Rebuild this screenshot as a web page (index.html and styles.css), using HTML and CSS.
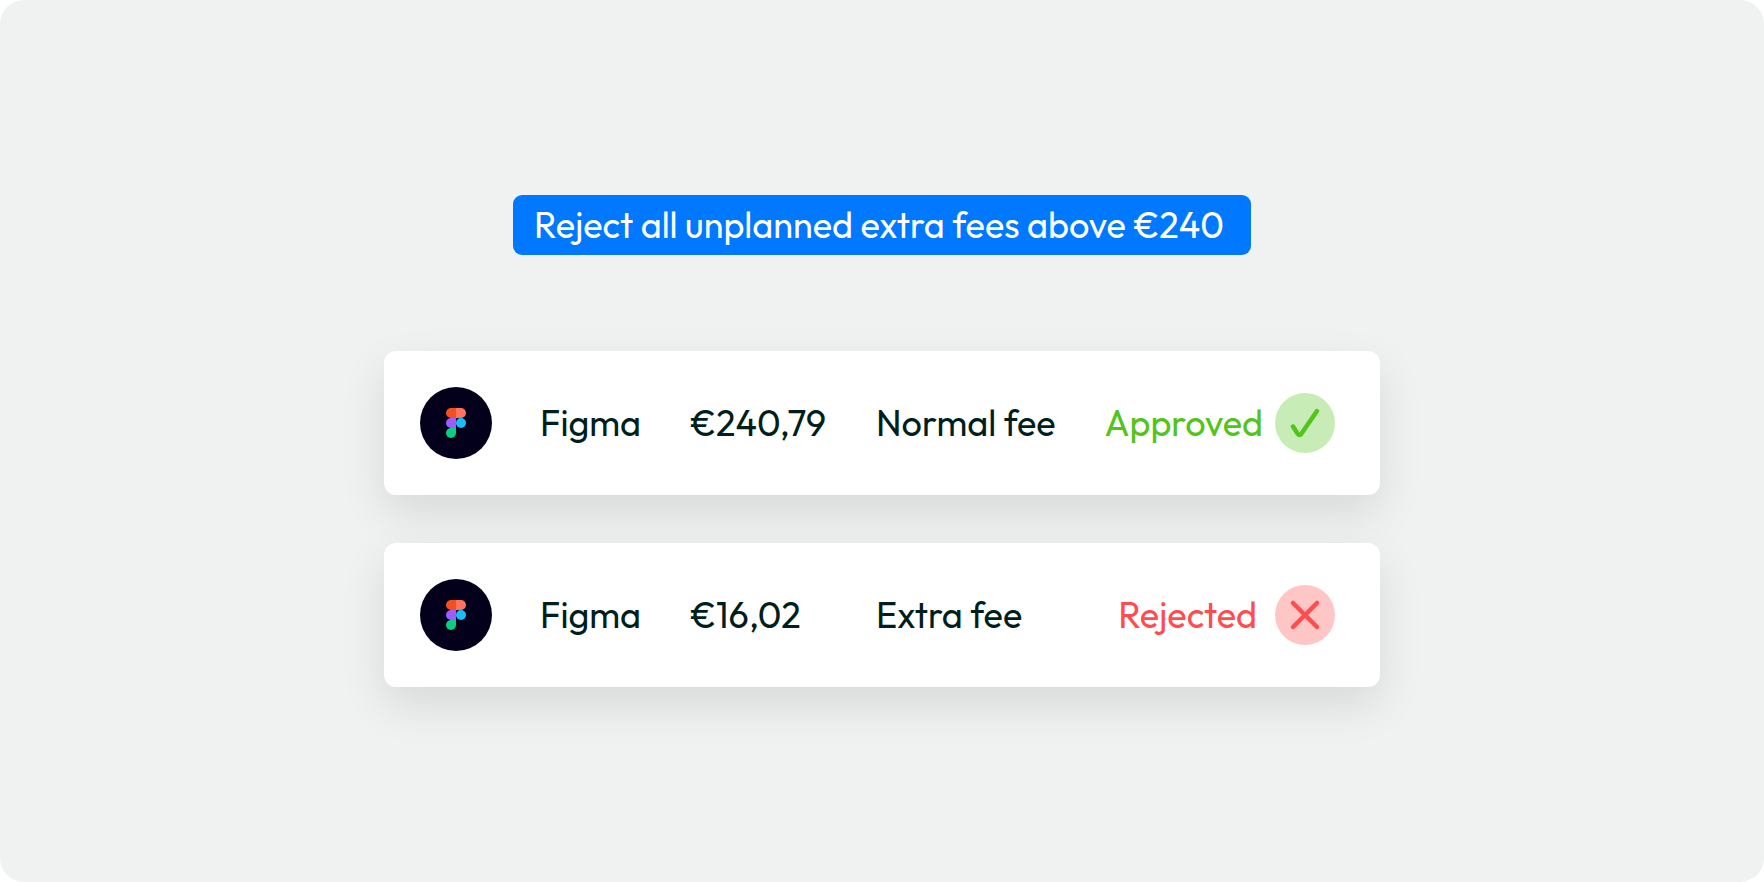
FILE: index.html
```
<!DOCTYPE html>
<html lang="en">
<head>
<meta charset="utf-8">
<meta name="viewport" content="width=device-width, initial-scale=1">
<title>Extra fee rule</title>
<link rel="stylesheet" href="styles.css">
</head>
<body>
<svg class="symbols" aria-hidden="true">
  <symbol id="figma" viewBox="0 0 20 30">
    <path fill="#f4501e" d="M5 0h5v10H5A5 5 0 0 1 5 0z"/>
    <path fill="#ff7262" d="M10 0h5a5 5 0 0 1 0 10h-5z"/>
    <path fill="#a259ff" d="M5 10h5v10H5a5 5 0 0 1 0-10z"/>
    <circle fill="#1abcfe" cx="15" cy="15" r="5"/>
    <path fill="#0acf83" d="M5 20h5v5a5 5 0 1 1-5-5z"/>
  </symbol>
</svg>
<main class="stage">
  <h1 class="rule">Reject all unplanned extra fees above €240</h1>
  <ul class="fees">
    <li class="fee">
      <span class="logo"><svg class="logo-mark" role="img" aria-label="Figma logo"><use href="#figma"/></svg></span>
      <span>Figma</span>
      <span>€240,79</span>
      <span>Normal fee</span>
      <span class="status approved">
        <span>Approved</span>
        <svg class="badge" viewBox="0 0 60 60" aria-hidden="true">
          <circle class="badge-disc" cx="30" cy="30" r="30"/>
          <path class="badge-mark" d="M18 33.5L22.6 40.6Q24.5 43.2 26.5 40.6L42 18"/>
        </svg>
      </span>
    </li>
    <li class="fee">
      <span class="logo"><svg class="logo-mark" role="img" aria-label="Figma logo"><use href="#figma"/></svg></span>
      <span>Figma</span>
      <span>€16,02</span>
      <span>Extra fee</span>
      <span class="status rejected">
        <span>Rejected</span>
        <svg class="badge" viewBox="0 0 60 60" aria-hidden="true">
          <circle class="badge-disc" cx="30" cy="30" r="30"/>
          <path class="badge-mark" d="M18 18L42 42M42 18L18 42"/>
        </svg>
      </span>
    </li>
  </ul>
</main>
</body>
</html>
```
FILE: styles.css
```
* {
  box-sizing: border-box;
}

body {
  margin: 0;
  background: #fff;
  color: #001e1c;
  font-family: Outfit, Lato, sans-serif;
  font-size: 36px;
  line-height: 46px;
}

.symbols {
  display: none;
}

.stage {
  display: flex;
  flex-direction: column;
  align-items: center;
  justify-content: center;
  gap: 96px;
  min-height: 100vh;
  padding: 48px 24px;
  background: #eff2f1;
  border-radius: 24px;
}

.rule {
  margin: 0;
  padding: 7px 27px 7px 21px;
  border-radius: 9px;
  background: #0078ff;
  color: #fff;
  font-size: inherit;
  font-weight: 400;
}

.fees {
  display: flex;
  flex-direction: column;
  gap: 48px;
  width: 100%;
  max-width: 996px;
  margin: 0;
  padding: 0;
  list-style: none;
}

.fee {
  display: grid;
  grid-template-columns: 72px 102fr 138fr 180fr 231fr;
  column-gap: 48px;
  align-items: center;
  padding: 36px 45px 36px 36px;
  border-radius: 12px;
  background: #fff;
  box-shadow: 0 18px 45px rgba(0, 0, 0, 0.1);
  white-space: nowrap;
}

.logo {
  display: grid;
  place-items: center;
  height: 72px;
  border-radius: 50%;
  background: #03001c;
}

.logo-mark {
  width: 20px;
  height: 30px;
}

.status {
  display: flex;
  align-items: center;
  justify-content: flex-end;
}

.badge {
  flex: none;
  width: 60px;
  height: 60px;
}

.badge-disc {
  fill: currentColor;
  opacity: 0.32;
}

.badge-mark {
  fill: none;
  stroke: currentColor;
  stroke-width: 4.5;
  stroke-linecap: round;
  stroke-linejoin: round;
}

.approved {
  gap: 12px;
  color: #52c41a;
}

.rejected {
  gap: 18px;
  color: #ff4d4f;
}
```
